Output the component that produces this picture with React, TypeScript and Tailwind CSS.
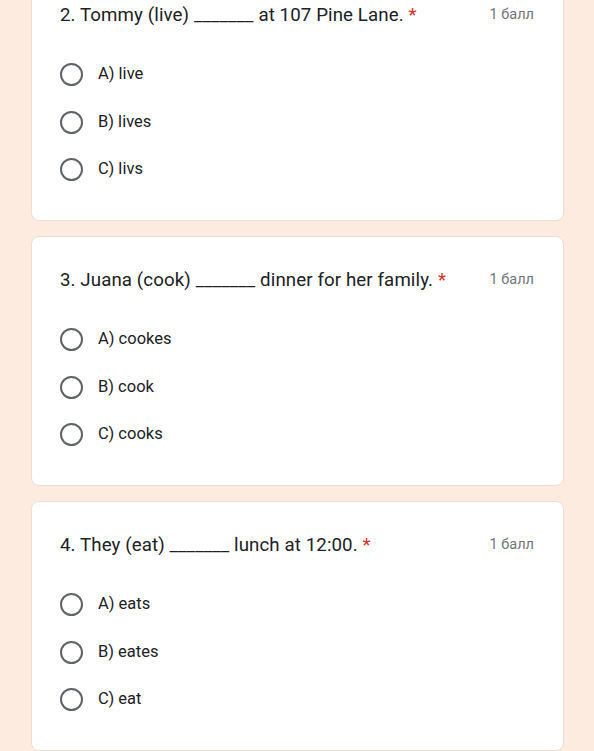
import React from "react";

type Question = {
  title: string;
  options: string[];
};

const QUESTIONS: Question[] = [
  { title: "2. Tommy (live) _______ at 107 Pine Lane.", options: ["A) live", "B) lives", "C) livs"] },
  { title: "3. Juana (cook) _______ dinner for her family.", options: ["A) cookes", "B) cook", "C) cooks"] },
  { title: "4. They (eat) _______ lunch at 12:00.", options: ["A) eats", "B) eates", "C) eat"] },
];

function Radio() {
  return <span className="block h-[23px] w-[23px] shrink-0 rounded-full border-2 border-[#5f6368]" />;
}

function QuestionCard({ q }: { q: Question }) {
  return (
    <div className="ml-[31px] mr-[30px] rounded-lg border border-[#eadfd6] bg-white pb-[27px] pl-[28px] pr-[29px] pt-[31px]">
      <div className="flex items-center justify-between">
        <div className="font-['Roboto',sans-serif] text-[18.7px] leading-6 tracking-[0.1px] text-[#202124]">
          {q.title} <span className="text-[#d93025]">*</span>
        </div>
        <div className="font-['Roboto',sans-serif] text-[14.5px] leading-6 text-[#70757a]">1 балл</div>
      </div>
      <div className="mt-[23px] flex flex-col">
        {q.options.map((o, i) => (
          <label key={o} className={`flex items-center gap-[15px] ${i === 2 ? "h-[47px]" : "h-12"}`}>
            <Radio />
            <span className="font-['Roboto',sans-serif] text-[16.5px] text-[#202124]">{o}</span>
          </label>
        ))}
      </div>
    </div>
  );
}

export default function App() {
  return (
    <div className="h-[751px] overflow-hidden bg-[#fdebdf]">
      <div className="-mt-[29px] flex flex-col gap-[15px]">
        {QUESTIONS.map((q) => (
          <QuestionCard key={q.title} q={q} />
        ))}
      </div>
    </div>
  );
}
